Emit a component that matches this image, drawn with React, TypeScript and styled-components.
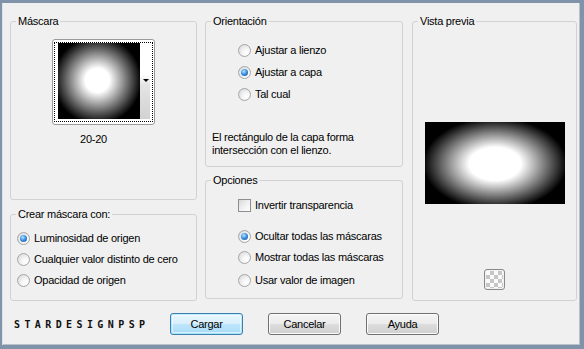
import React from "react";
import styled, { createGlobalStyle, css } from "styled-components";

const GlobalStyle = createGlobalStyle`
  html, body { margin: 0; padding: 0; background: #f0f0f0; }
  body { font-family: "Liberation Sans", Arial, sans-serif; }
`;

const Window = styled.div`
  box-sizing: border-box;
  width: 584px;
  height: 349px;
  background: #f0f0f0;
  border-style: solid;
  border-color: #8193a9;
  border-width: 3px 4px 4px 2px;
  box-shadow: inset 1px 0 #dde3ea, inset 0 -1px #b7c2ce, inset -1px 0 #b7c2ce;
  display: flex;
  flex-direction: column;
  font-family: "Liberation Sans", Arial, sans-serif;
  font-size: 11px;
  letter-spacing: -0.25px;
  color: #000;
`;

const Main = styled.div`
  box-sizing: border-box;
  height: 298px;
  display: flex;
  gap: 8px;
  padding: 11px 0 0 8px;
`;

const Column = styled.div<{ $w: number; $gap: number }>`
  width: ${(p) => p.$w}px;
  display: flex;
  flex-direction: column;
  gap: ${(p) => p.$gap}px;
`;

const Group = styled.fieldset<{ $h: number }>`
  box-sizing: border-box;
  margin: 0;
  padding: 0;
  min-width: 0;
  height: ${(p) => p.$h}px;
  border: 1px solid #d2d2d2;
  border-radius: 3px;
  display: flex;
  flex-direction: column;
`;

const PreviewGroup = styled(Group)`
  margin-left: 1px;
  align-items: center;
`;

const Legend = styled.legend`
  margin-left: 5px;
  padding: 0 2px;
  line-height: 14px;
  font-size: 11px;
`;

const OptionList = styled.div<{ $top: number; $left: number }>`
  display: flex;
  flex-direction: column;
  padding-top: ${(p) => p.$top}px;
  padding-left: ${(p) => p.$left}px;
`;

const OptionRow = styled.label<{ $h: number; $mt?: number }>`
  display: flex;
  align-items: center;
  gap: 4px;
  height: ${(p) => p.$h}px;
  margin-top: ${(p) => p.$mt ?? 0}px;
  line-height: 13px;
`;

const RadioCircle = styled.span<{ $checked?: boolean }>`
  box-sizing: border-box;
  flex: none;
  width: 13px;
  height: 13px;
  border-radius: 50%;
  border: 1px solid #a6a6a6;
  background: radial-gradient(circle at 70% 70%, #ffffff 0%, #f6f6f6 35%, #d2d2d2 100%);
  display: flex;
  align-items: center;
  justify-content: center;
  ${(p) =>
    p.$checked &&
    css`
      &::after {
        content: "";
        width: 7px;
        height: 7px;
        border-radius: 50%;
        background: radial-gradient(circle at 40% 35%, #b9e6ff 0%, #3d93e4 45%, #10498f 100%);
      }
    `}
`;

const CheckBox = styled.span`
  box-sizing: border-box;
  flex: none;
  width: 13px;
  height: 13px;
  border: 1px solid #8e8e8e;
  background: linear-gradient(135deg, #d8d8d8 0%, #f0f0f0 50%, #ffffff 100%);
`;

const Description = styled.p`
  margin: 26px 0 0 6px;
  line-height: 13px;
`;

const MaskArea = styled.div`
  display: flex;
  flex-direction: column;
  align-items: center;
  padding-top: 11px;
`;

const ThumbFrame = styled.div`
  border: 1px solid #9a9a9a;
  border-radius: 3px;
  padding: 2px 1px;
  background: #fff;
`;

const ThumbFocus = styled.div`
  display: flex;
  border: 1px dotted #000;
  padding: 0 2px 2px 3px;
  background: #fff;
`;

const MaskImage = styled.div`
  width: 82px;
  height: 76px;
  background: radial-gradient(circle at 48% 49%, #ffffff 0px, #ffffff 12px, #000000 44px);
`;

const ThumbStrip = styled.div`
  width: 10px;
  height: 76px;
  box-sizing: border-box;
  padding-top: 36px;
  display: flex;
  flex-direction: column;
  align-items: flex-end;
  background: linear-gradient(to bottom, #ffffff 0%, #ffffff 42%, #e4e4e4 55%, #d2d2d2 100%);
`;

const DropArrow = styled.span`
  width: 0;
  height: 0;
  margin-right: 1px;
  border-left: 3px solid transparent;
  border-right: 3px solid transparent;
  border-top: 3px solid #000;
`;

const MaskName = styled.div`
  margin-top: 8px;
  padding-right: 20px;
  line-height: 13px;
`;

const PreviewImage = styled.div`
  margin-top: 94px;
  width: 140px;
  height: 82px;
  background: radial-gradient(ellipse 72px 46px at 50% 51%, #ffffff 0%, #ffffff 36%, #000000 100%);
`;

const CheckerIcon = styled.div`
  box-sizing: border-box;
  margin-top: 65px;
  width: 21px;
  height: 21px;
  border: 1px solid #8a8a8a;
  border-radius: 3px;
  padding: 1px;
  background-color: #fff;
  background-image: conic-gradient(#c6c6c6 25%, #fafafa 0 50%, #c6c6c6 0 75%, #fafafa 0);
  background-size: 8px 8px;
  background-position: 1px 1px;
  background-clip: content-box;
`;

const BottomBar = styled.div`
  flex: 1;
  display: flex;
  align-items: flex-start;
  padding: 12px 0 0 12px;
`;

const Watermark = styled.span`
  width: 156px;
  align-self: center;
  margin-top: -10px;
  font-family: "DejaVu Sans Mono", "Liberation Mono", monospace;
  font-weight: bold;
  font-size: 10px;
  letter-spacing: 4.4px;
  color: #111;
`;

const ButtonRow = styled.div`
  display: flex;
  gap: 25px;
`;

const Button = styled.button<{ $primary?: boolean }>`
  box-sizing: border-box;
  width: 73px;
  height: 22px;
  padding: 0;
  font-family: inherit;
  font-size: 11px;
  letter-spacing: -0.25px;
  color: #000;
  border: 1px solid #707070;
  border-radius: 3px;
  background: linear-gradient(to bottom, #f4f4f4 0%, #ececec 48%, #dddddd 52%, #cfcfcf 100%);
  box-shadow: inset 0 0 0 1px #fbfbfb;
  ${(p) =>
    p.$primary &&
    css`
      border-color: #3c7fb1;
      background: linear-gradient(to bottom, #eaf6fd 0%, #d9f0fc 48%, #bee6fd 52%, #a7d9f5 100%);
      box-shadow: inset 0 0 0 1px #48d3fb55, inset 0 0 0 2px #ffffff88;
    `}
`;

export default function App() {
  return (
    <>
      <GlobalStyle />
      <Window>
        <Main>
          <Column $w={187} $gap={7}>
            <Group $h={186}>
              <Legend>Máscara</Legend>
              <MaskArea>
                <ThumbFrame>
                  <ThumbFocus>
                    <MaskImage />
                    <ThumbStrip>
                      <DropArrow />
                    </ThumbStrip>
                  </ThumbFocus>
                </ThumbFrame>
                <MaskName>20-20</MaskName>
              </MaskArea>
            </Group>
            <Group $h={94}>
              <Legend>Crear máscara con:</Legend>
              <OptionList $top={7} $left={6}>
                <OptionRow $h={21}>
                  <RadioCircle $checked />
                  Luminosidad de origen
                </OptionRow>
                <OptionRow $h={21}>
                  <RadioCircle />
                  Cualquier valor distinto de cero
                </OptionRow>
                <OptionRow $h={21}>
                  <RadioCircle />
                  Opacidad de origen
                </OptionRow>
              </OptionList>
            </Group>
          </Column>
          <Column $w={198} $gap={6}>
            <Group $h={153}>
              <Legend>Orientación</Legend>
              <OptionList $top={11} $left={32}>
                <OptionRow $h={22}>
                  <RadioCircle />
                  Ajustar a lienzo
                </OptionRow>
                <OptionRow $h={22}>
                  <RadioCircle $checked />
                  Ajustar a capa
                </OptionRow>
                <OptionRow $h={22}>
                  <RadioCircle />
                  Tal cual
                </OptionRow>
              </OptionList>
              <Description>
                El rectángulo de la capa forma
                <br />
                intersección con el lienzo.
              </Description>
            </Group>
            <Group $h={126}>
              <Legend>Opciones</Legend>
              <OptionList $top={8} $left={32}>
                <OptionRow $h={21}>
                  <CheckBox />
                  Invertir transparencia
                </OptionRow>
                <OptionRow $h={21} $mt={10}>
                  <RadioCircle $checked />
                  Ocultar todas las máscaras
                </OptionRow>
                <OptionRow $h={21}>
                  <RadioCircle />
                  Mostrar todas las máscaras
                </OptionRow>
                <OptionRow $h={21} $mt={2}>
                  <RadioCircle />
                  Usar valor de imagen
                </OptionRow>
              </OptionList>
            </Group>
          </Column>
          <Column $w={166} $gap={0}>
            <PreviewGroup $h={287}>
              <Legend>Vista previa</Legend>
              <PreviewImage />
              <CheckerIcon />
            </PreviewGroup>
          </Column>
        </Main>
        <BottomBar>
          <Watermark>STARDESIGNPSP</Watermark>
          <ButtonRow>
            <Button $primary>Cargar</Button>
            <Button>Cancelar</Button>
            <Button>Ayuda</Button>
          </ButtonRow>
        </BottomBar>
      </Window>
    </>
  );
}
